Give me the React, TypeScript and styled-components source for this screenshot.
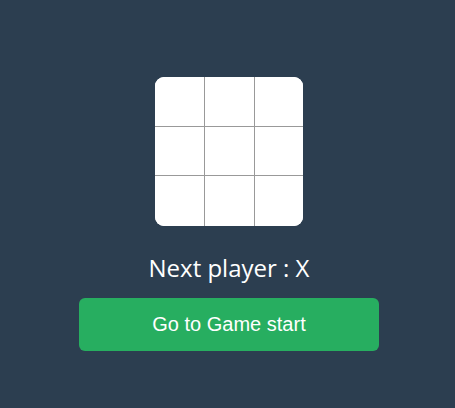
import React, { useState } from "react";
import styled, { createGlobalStyle } from "styled-components";

const GlobalStyle = createGlobalStyle`
  html, body {
    margin: 0;
    padding: 0;
    height: 100%;
    background: #2c3e50;
  }
  #root {
    min-height: 100%;
  }
`;

const Page = styled.div`
  min-height: 408px;
  display: flex;
  flex-direction: column;
  align-items: center;
  padding: 77px 0 0 3px;
  box-sizing: border-box;
  font-family: "Open Sans", "Noto Sans", sans-serif;
`;

const Board = styled.div`
  width: 148px;
  height: 149px;
  display: grid;
  grid-template-columns: 50px 50px 48px;
  grid-template-rows: 50px 49px 50px;
  background: #fff;
  border-radius: 9px;
  overflow: hidden;
`;

const Cell = styled.button<{ $right: boolean; $bottom: boolean }>`
  margin: 0;
  padding: 0;
  border: none;
  background: #fff;
  border-right: ${(p) => (p.$right ? "1px solid #999" : "none")};
  border-bottom: ${(p) => (p.$bottom ? "1px solid #999" : "none")};
  font-size: 32px;
  color: #2c3e50;
  cursor: pointer;
`;

const Status = styled.div`
  margin-top: 26px;
  color: #fff;
  font-size: 24px;
  line-height: 32px;
`;

const StartButton = styled.button`
  margin-top: 14px;
  width: 300px;
  height: 53px;
  border: none;
  border-radius: 6px;
  background: #27ae60;
  color: #fff;
  font-family: "Liberation Sans", Arial, sans-serif;
  font-size: 20px;
  cursor: pointer;
`;

export default function App() {
  const [squares, setSquares] = useState<(string | null)[]>(Array(9).fill(null));
  const [xNext, setXNext] = useState(true);

  const play = (i: number) => {
    if (squares[i]) return;
    const next = squares.slice();
    next[i] = xNext ? "X" : "O";
    setSquares(next);
    setXNext(!xNext);
  };

  return (
    <Page>
      <GlobalStyle />
      <Board>
        {squares.map((v, i) => (
          <Cell key={i} $right={i % 3 !== 2} $bottom={i < 6} onClick={() => play(i)}>
            {v}
          </Cell>
        ))}
      </Board>
      <Status>Next player : {xNext ? "X" : "O"}</Status>
      <StartButton
        onClick={() => {
          setSquares(Array(9).fill(null));
          setXNext(true);
        }}
      >
        Go to Game start
      </StartButton>
    </Page>
  );
}
